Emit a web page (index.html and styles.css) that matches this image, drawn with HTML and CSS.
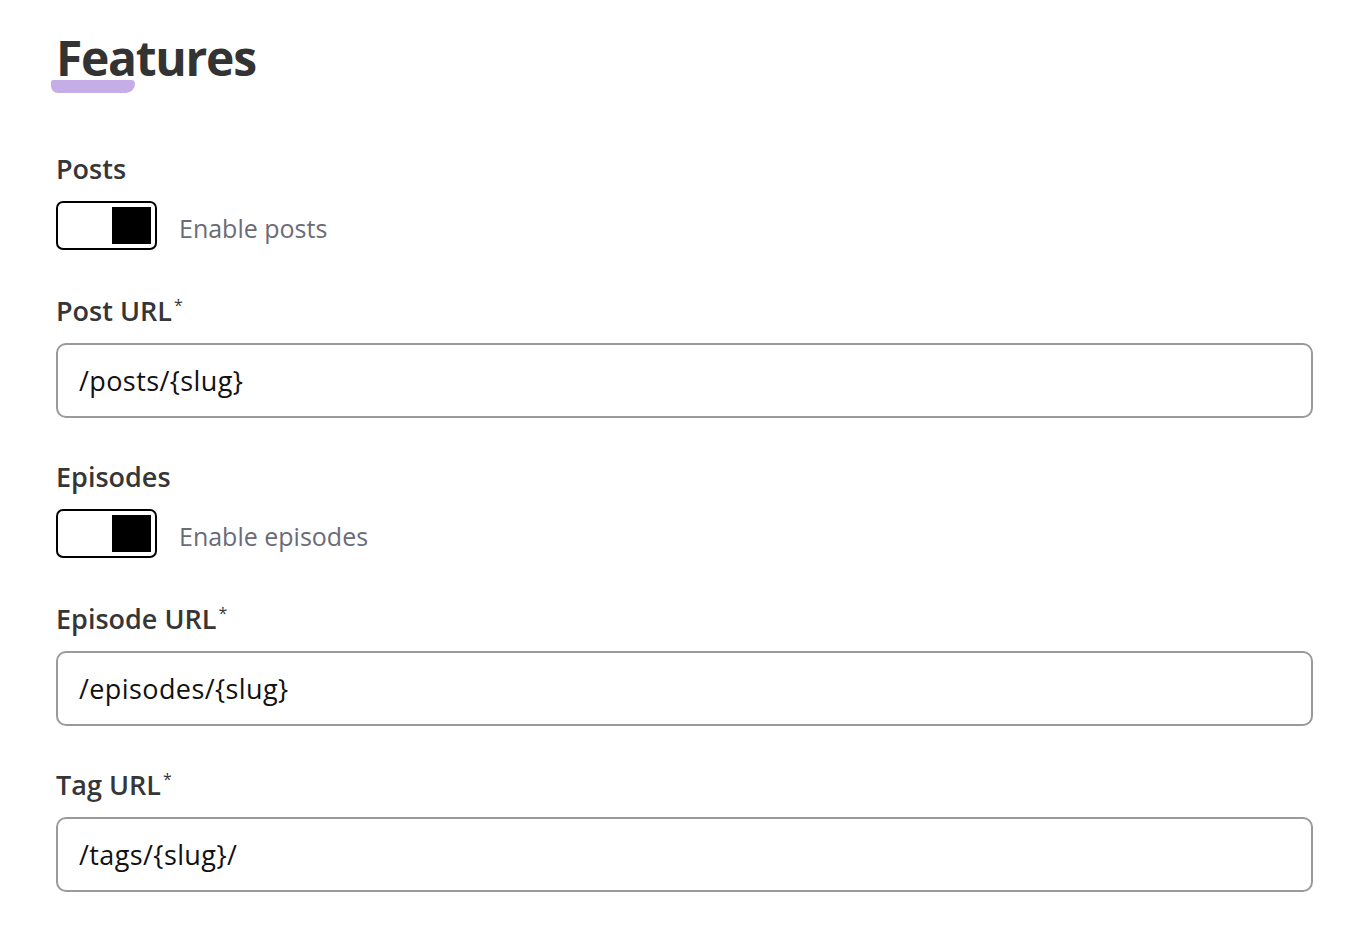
FILE: index.html
```html
<!DOCTYPE html>
<html lang="en">
<head>
<meta charset="utf-8">
<title>Features</title>
<link rel="stylesheet" href="styles.css">
</head>
<body>
<main class="page">
  <h1 class="title"><span class="title-text">Features</span></h1>
  <form class="form">
    <div class="field field-toggle">
      <div class="label">Posts</div>
      <label class="toggle-row">
        <span class="toggle"><span class="knob"></span></span>
        <span class="toggle-desc">Enable posts</span>
      </label>
    </div>
    <div class="field field-input">
      <label class="label" for="post-url">Post URL<sup class="req">*</sup></label>
      <input class="input" id="post-url" type="text" value="/posts/{slug}">
    </div>
    <div class="field field-toggle">
      <div class="label">Episodes</div>
      <label class="toggle-row">
        <span class="toggle"><span class="knob"></span></span>
        <span class="toggle-desc">Enable episodes</span>
      </label>
    </div>
    <div class="field field-input">
      <label class="label" for="episode-url">Episode URL<sup class="req">*</sup></label>
      <input class="input" id="episode-url" type="text" value="/episodes/{slug}">
    </div>
    <div class="field field-input">
      <label class="label" for="tag-url">Tag URL<sup class="req">*</sup></label>
      <input class="input" id="tag-url" type="text" value="/tags/{slug}/">
    </div>
  </form>
</main>
</body>
</html>
```

FILE: styles.css
```css
html, body {
  margin: 0;
  padding: 0;
  background: #ffffff;
}

body {
  font-family: "Open Sans", "Noto Sans", "Liberation Sans", sans-serif;
  color: #333333;
}

.page {
  padding: 29px 49px 0 56px;
}

.title {
  margin: 0 0 64px 0;
  font-size: 48px;
  line-height: 58px;
  font-weight: 700;
  color: #333333;
  letter-spacing: -1.3px;
}

.title-text {
  position: relative;
  display: inline-block;
  z-index: 0;
}

.title-text::after {
  content: "";
  position: absolute;
  left: -5px;
  top: 51px;
  width: 84px;
  height: 13px;
  background: #c5aee8;
  border-radius: 3px 5px 12px 9px;
  z-index: -1;
}

.form {
  display: flex;
  flex-direction: column;
}

.field {
  display: flex;
  flex-direction: column;
}

.field-toggle {
  margin-bottom: 43px;
}

.field-input {
  margin-bottom: 41px;
}

.label {
  font-size: 27px;
  line-height: 36px;
  font-weight: 600;
  color: #363636;
  margin-bottom: 14px;
}

.req {
  font-size: 16px;
  font-weight: 400;
  vertical-align: top;
  position: relative;
  top: -6px;
  margin-left: 2px;
}

.toggle-row {
  display: flex;
  align-items: center;
  gap: 22px;
}

.toggle {
  box-sizing: border-box;
  width: 101px;
  height: 49px;
  border: 2px solid #000000;
  border-radius: 7px;
  padding: 4px;
  display: flex;
  justify-content: flex-end;
  background: #ffffff;
}

.knob {
  width: 39px;
  height: 37px;
  background: #000000;
}

.toggle-desc {
  font-size: 25px;
  line-height: 34px;
  color: #6b6b78;
  position: relative;
  top: 2px;
}

.input {
  box-sizing: border-box;
  width: 100%;
  height: 75px;
  border: 2px solid #9a9a9a;
  border-radius: 10px;
  padding: 0 21px;
  font-family: "Open Sans", "Noto Sans", "Liberation Sans", sans-serif;
  font-size: 27px;
  letter-spacing: 0.4px;
  color: #111111;
  background: #ffffff;
  outline: none;
  margin: 0;
}
```
